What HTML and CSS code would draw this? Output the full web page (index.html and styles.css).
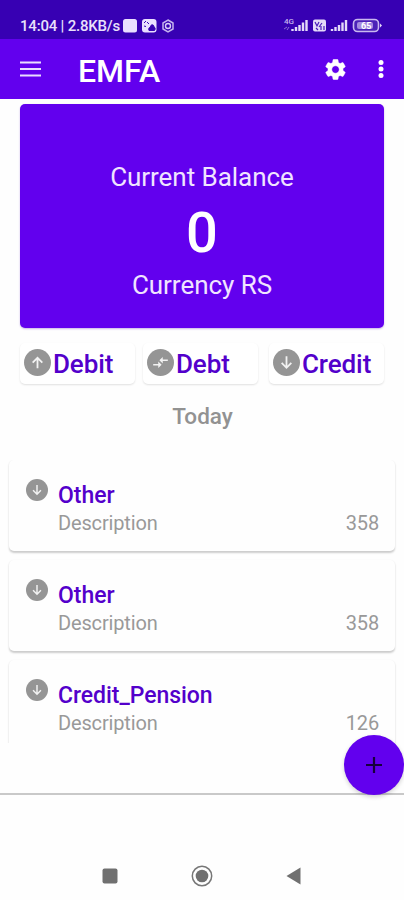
FILE: index.html
```
<!DOCTYPE html>
<html lang="en">
<head>
<meta charset="utf-8">
<title>EMFA</title>
<link rel="stylesheet" href="styles.css">
</head>
<body>
<svg class="defs" aria-hidden="true">
  <symbol id="down" viewBox="0 0 24 24"><circle cx="12" cy="12" r="12" fill="#959595"/><path d="M12 6.500v10M7.700 12.300l4.300 4.400 4.300-4.400" fill="none" stroke="#f2f2f2" stroke-width="1.600"/></symbol>
  <symbol id="up" viewBox="0 0 24 24"><circle cx="12" cy="12" r="12" fill="#959595"/><path d="M12 17V7.800M7.700 12.200L12 7.800l4.300 4.400" fill="none" stroke="#f2f2f2" stroke-width="1.600"/></symbol>
  <symbol id="swap" viewBox="0 0 24 24"><circle cx="12" cy="12" r="12" fill="#959595"/><path d="M5.500 14h6M12 10h6.500" fill="none" stroke="#f2f2f2" stroke-width="1.500"/><path d="M10 11.200l3 2.800-3 2.800zM14 7.200L11 10l3 2.800z" fill="#f2f2f2"/></symbol>
</svg>
<div class="phone">
  <div class="status">
    <span class="clock">14:04 | 2.8KB/s</span>
    <svg class="notes" width="54" height="16" viewBox="0 0 54 16">
      <rect x="1" y="1" width="14" height="13.500" rx="2.500" fill="#eadfff"/>
      <rect x="20" y="1" width="14.500" height="13.500" rx="3" fill="#eadfff"/>
      <path d="M22 5l2-2M22 8l2 .5M27 12.500c-1-2.500 1-3.500 1.500-3.500 0-3 3.500-3 3.500 0 1.500.5 1.500 2.500.5 3.500zM25 4l2 2" stroke="#3700b3" stroke-width="1" fill="#3700b3"/>
      <path d="M46 2l5 3v6l-5 3-5-3V5z" fill="none" stroke="#c5b3ee" stroke-width="1.500"/>
      <circle cx="46" cy="8" r="2.500" fill="none" stroke="#d9ccf7" stroke-width="1.400"/>
    </svg>
    <svg class="signals" width="99" height="18" viewBox="0 0 99 18">
      <text x="0" y="8" class="tiny">4G</text>
      <path d="M0 13l3-2M3 14l2-3" stroke="#8c70d2" fill="none"/>
      <path d="M8.500 15v-2M12 15v-4M15.500 15V9M19 15V6.500M22.500 15V4" stroke="#e4daf9" stroke-width="2.400"/>
      <rect x="29" y="3.500" width="13" height="12" rx="2" fill="#e4daf9"/>
      <path d="M31 6l2 4 2-4M38 7l-3 4M32 12l2 2M37 10v4M40 10v4" stroke="#4a1cba" stroke-width="1.200" fill="none"/>
      <path d="M48 15v-2M51.500 15v-4M55 15V9M58.500 15V6.500M62 15V4" stroke="#e4daf9" stroke-width="2.400"/>
      <rect x="69.500" y="3.500" width="25" height="12" rx="4" fill="#4b21b8" stroke="#c9b8ef" stroke-width="1.600"/>
      <rect x="73" y="6" width="16" height="7" rx="2" fill="#a58ae0"/>
      <path d="M96 7.500l2 2-2 2z" fill="#e4daf9"/>
      <text x="77" y="12.700" class="level">65</text>
    </svg>
  </div>
  <div class="bar">
    <svg class="menu" width="21" height="16" viewBox="0 0 21 16"><path d="M0 1.500h21M0 8h21M0 14.500h21" stroke="#e9dcff" stroke-width="2"/></svg>
    <h1>EMFA</h1>
    <svg class="gear" width="25" height="25" viewBox="0 0 24 24"><path fill="#fff" stroke="#fff" stroke-width=".5" d="M19.140 12.940c.04-.3.06-.61.06-.94 0-.32-.02-.64-.07-.94l2.030-1.580c.18-.14.23-.41.12-.61l-1.920-3.320c-.12-.22-.37-.29-.59-.22l-2.390.96c-.5-.38-1.030-.7-1.620-.94l-.36-2.540c-.04-.24-.24-.41-.48-.41h-3.840c-.24 0-.43.17-.47.41l-.36 2.540c-.59.24-1.130.57-1.620.94l-2.390-.96c-.22-.08-.47 0-.59.22L2.740 8.870c-.12.21-.08.47.12.61l2.030 1.580c-.05.3-.09.63-.09.94s.02.64.07.94l-2.030 1.580c-.18.14-.23.41-.12.61l1.920 3.320c.12.22.37.29.59.22l2.390-.96c.5.38 1.030.7 1.620.94l.36 2.540c.05.24.24.41.48.41h3.840c.24 0 .44-.17.47-.41l.36-2.540c.59-.24 1.130-.56 1.620-.94l2.390.96c.22.08.47 0 .59-.22l1.920-3.320c.12-.22.07-.47-.12-.61l-2.010-1.580zM12 15.600c-1.980 0-3.600-1.620-3.600-3.600s1.620-3.600 3.600-3.600 3.600 1.620 3.600 3.600-1.620 3.600-3.600 3.600z"/></svg>
    <svg class="more" width="6" height="20" viewBox="0 0 6 20"><g fill="#fff"><circle cx="3" cy="3.500" r="2.500"/><circle cx="3" cy="10" r="2.500"/><circle cx="3" cy="16.500" r="2.500"/></g></svg>
  </div>
  <section class="balance">
    <div class="label">Current Balance</div>
    <div class="amount">0</div>
    <div class="currency">Currency RS</div>
  </section>
  <div class="actions">
    <div class="action debit"><svg><use href="#up"/></svg><span>Debit</span></div>
    <div class="action debt"><svg><use href="#swap"/></svg><span>Debt</span></div>
    <div class="action credit"><svg><use href="#down"/></svg><span>Credit</span></div>
  </div>
  <h2>Today</h2>
  <div class="list">
    <div class="entry"><svg><use href="#down"/></svg><div class="body"><div class="name">Other</div><div class="row"><span class="desc">Description</span><span class="value">358</span></div></div></div>
    <div class="entry"><svg><use href="#down"/></svg><div class="body"><div class="name">Other</div><div class="row"><span class="desc">Description</span><span class="value">358</span></div></div></div>
    <div class="entry"><svg><use href="#down"/></svg><div class="body"><div class="name">Credit_Pension</div><div class="row"><span class="desc">Description</span><span class="value">126</span></div></div></div>
  </div>
  <div class="fab"><svg width="16" height="16" viewBox="0 0 16 16"><path d="M8 0v16M0 8h16" stroke="#16003c" stroke-width="2.200"/></svg></div>
  <div class="foot"></div>
  <div class="nav">
    <svg width="16" height="16"><rect x=".5" y=".5" width="15" height="15" rx="2" fill="#707070"/></svg>
    <svg width="22" height="22"><circle cx="11" cy="11" r="9.700" fill="none" stroke="#777" stroke-width="1.500"/><circle cx="11" cy="11" r="6.300" fill="#707070"/></svg>
    <svg width="16" height="18"><path d="M.5 9L14.500.5v17z" fill="#707070"/></svg>
  </div>
</div>
</body>
</html>
```
FILE: styles.css
```
* { box-sizing: border-box; }
body { margin: 0; background: #fefefe; font-family: Roboto, "Liberation Sans", sans-serif; }
svg { display: block; flex: none; }
.defs { position: absolute; width: 0; height: 0; }
.phone { position: relative; width: 404px; height: 900px; overflow: hidden; display: flex; flex-direction: column; }
.status { height: 39px; flex: none; background: #3700b3; display: flex; align-items: flex-start; padding: 17px 21px 0 20px; }
.clock { color: #e9e0fb; font-size: 15px; letter-spacing: -.2px; font-weight: 500; line-height: 18px; width: 102px; white-space: nowrap; }
.notes { margin-top: 1px; }
.signals { margin-left: auto; margin-top: -1px; }
.tiny { font-size: 8px; font-weight: 500; fill: #c5b3ee; }
.level { font-size: 9px; font-weight: 700; fill: #fff; }
.bar { height: 60px; flex: none; background: #6200ee; display: flex; align-items: center; padding: 0 20px; }
h1 { margin: 4px auto 0 37px; color: #fff; font-size: 32px; line-height: 38px; font-weight: 500; }
.gear { margin-right: 30px; }
.balance { margin: 5px 20px 0; height: 224px; flex: none; border-radius: 5px; background: #6200ee; color: #f0e4ff; text-align: center; padding-top: 57px; font-size: 26px; letter-spacing: -.04px; box-shadow: 0 1px 2px #c9b4e8; }
.label, .currency { line-height: 32px; }
.amount { color: #fff; font-size: 56px; line-height: 64px; font-weight: 500; margin: 8px 0 4px; }
.actions { display: flex; margin: 15px 20px 0; height: 41px; flex: none; }
.action { width: 115px; border-radius: 5px; background: #fff; box-shadow: 0 1px 2px rgba(0,0,0,.12); display: flex; align-items: center; padding-left: 4px; color: #5300cb; font-size: 26px; line-height: 32px; font-weight: 500; letter-spacing: -.1px; white-space: nowrap; }
.action svg { width: 27px; height: 27px; margin-right: 2px; margin-top: -3px; }
.action span { margin-top: 1px; }
.debt { margin-left: 8px; }
.credit { margin-left: 11px; }
h2 { margin: 18px 0 0; padding-left: 1px; text-align: center; color: #929292; font-size: 22.5px; line-height: 28px; font-weight: 500; }
.list { margin-top: 30px; height: 283px; padding: 0 9px; overflow: hidden; flex: none; display: flex; flex-direction: column; gap: 9px; }
.entry { height: 91px; flex: none; border-radius: 5px; background: #fefefe; box-shadow: 0 1.5px 2px rgba(0,0,0,.2); display: flex; padding: 19px 16px 0 17px; }
.entry svg { width: 22px; height: 22px; margin-right: 10px; }
.body { flex: 1; padding-top: 3px; }
.name { color: #5300cb; font-size: 23px; line-height: 27px; font-weight: 500; letter-spacing: -.05px; }
.row { display: flex; justify-content: space-between; color: #999; font-size: 20px; line-height: 28px; letter-spacing: -.15px; }
.fab { position: absolute; left: 344px; top: 735px; width: 60px; height: 60px; border-radius: 50%; background: #6200ee; display: flex; align-items: center; justify-content: center; box-shadow: 0 2px 4px rgba(0,0,0,.18); }
.foot { height: 52px; flex: none; border-bottom: 2px solid #c9c9c9; }
.nav { flex: 1; display: flex; justify-content: center; align-items: center; gap: 73px; padding-top: 56px; }
```
